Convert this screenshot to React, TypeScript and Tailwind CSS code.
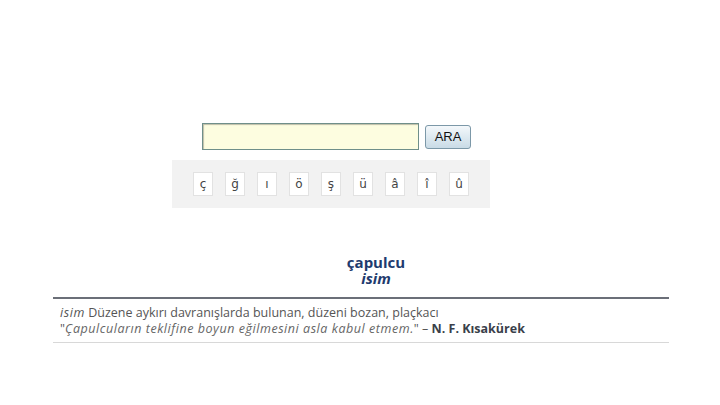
const letters = ['ç', 'ğ', 'ı', 'ö', 'ş', 'ü', 'â', 'î', 'û'];

export default function App() {
  return (
    <div className="min-h-[405px] w-[720px] bg-white pt-[123px] font-['Open_Sans',sans-serif]">
      <div className="ml-[172px] w-[318px]">
        <div className="flex items-center pl-[30px]">
          <input
            className="h-[27px] w-[217px] border border-[#6f8f8a] bg-[#fdfde0] px-1 text-sm outline-none shadow-[inset_1px_1px_1px_rgba(0,0,0,0.25)]"
            type="text"
          />
          <button className="ml-[6px] h-[24px] w-[46px] rounded-[3px] border border-[#7c98a8] bg-gradient-to-b from-[#f4f8fb] to-[#c9dbe6] font-['Liberation_Sans',sans-serif] text-[13px] text-[#111]">
            ARA
          </button>
        </div>
        <div className="mt-[10px] flex h-[48px] items-center bg-[#f2f2f2] pl-[21px]">
          {letters.map((l) => (
            <span
              key={l}
              className="mr-[12px] flex h-[24px] w-[20px] items-center justify-center border border-[#e2e2e2] bg-white font-['DejaVu_Sans',sans-serif] text-[12px] text-[#444]"
            >
              {l}
            </span>
          ))}
        </div>
      </div>

      <div className="mt-[46px] pl-[32px] text-center text-[#1e3b6e]">
        <div className="text-[15px] font-bold leading-[16px]">çapulcu</div>
        <div className="text-[15px] font-bold italic leading-[17px]">isim</div>
      </div>

      <div className="ml-[53px] mt-[10px] w-[616px] border-t-2 border-[#6b6f78] border-b border-b-[#d8d8d8] px-[7px] pb-[5px] pt-[6px] text-[12.5px] leading-[16px] text-[#555]">
        <div>
          <i className="tracking-[0.6px]">isim</i> Düzene aykırı davranışlarda bulunan, düzeni bozan, plaçkacı
        </div>
        <div>
          "<i className="tracking-[0.55px] text-[#666]">Çapulcuların teklifine boyun eğilmesini asla kabul etmem.</i>" –{' '}
          <b className="text-[#3a3f4a]">N. F. Kısakürek</b>
        </div>
      </div>
    </div>
  );
}
